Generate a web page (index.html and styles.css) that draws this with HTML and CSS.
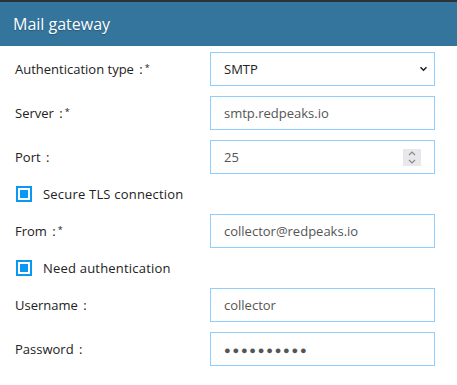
FILE: index.html
```html
<!DOCTYPE html>
<html lang="en">
  <head>
    <meta charset="UTF-8" />
    <title>Mail gateway</title>
    <link rel="stylesheet" href="styles.css">
  </head>
  <body>
    <header class="panel-header">
      <span>Mail gateway</span>
    </header>
    <div class="form">
      <div class="row">
        <label>Authentication type <span class="colon">:<sup>*</sup></span></label>
        <div class="field select">
          <span>SMTP</span>
          <svg class="chevron" width="9" height="6" viewBox="0 0 9 6">
            <path d="M1.5 1.2l3 3 3-3" fill="none" stroke="#222" stroke-width="1.6" />
          </svg>
        </div>
      </div>
      <div class="row">
        <label>Server <span class="colon">:<sup>*</sup></span></label>
        <div class="field">smtp.redpeaks.io</div>
      </div>
      <div class="row">
        <label>Port <span class="colon">:</span></label>
        <div class="field number">
          <span>25</span>
          <span class="spinner">
            <svg width="18" height="17" viewBox="0 0 18 17">
              <path d="M6 6l3-3 3 3M6 11l3 3 3-3" fill="none" stroke="#8a8a8a" stroke-width="1.2" />
            </svg>
          </span>
        </div>
      </div>
      <div class="check-row">
        <span class="checkbox"><span></span></span>
        <span>Secure TLS connection</span>
      </div>
      <div class="row">
        <label>From <span class="colon">:<sup>*</sup></span></label>
        <div class="field">collector@redpeaks.io</div>
      </div>
      <div class="check-row">
        <span class="checkbox"><span></span></span>
        <span>Need authentication</span>
      </div>
      <div class="row">
        <label>Username <span class="colon">:</span></label>
        <div class="field">collector</div>
      </div>
      <div class="row">
        <label>Password <span class="colon">:</span></label>
        <div class="field password">●●●●●●●●●●</div>
      </div>
    </div>
  </body>
</html>
```

FILE: styles.css
```css
body {
  margin: 0;
  font-family: "Open Sans", "Noto Sans", sans-serif;
  background: #fff;
  color: #222;
}
.panel-header {
  border-top: 2px solid #2b3238;
  background: #34759e;
  color: #fff;
  height: 44px;
  display: flex;
  align-items: center;
  padding: 0 13px;
  font-size: 16px;
  text-shadow: 0 1px 1px #0004;
}
.form {
  padding: 6px 22px 0 15px;
  display: flex;
  flex-direction: column;
  gap: 10px;
}
.row {
  display: flex;
  align-items: center;
  justify-content: space-between;
  font-size: 13px;
}
.colon {
  margin-left: 2px;
}
.colon sup {
  font-size: 9px;
  vertical-align: 3px;
  margin-left: 2px;
}
.field {
  box-sizing: border-box;
  width: 225px;
  height: 34px;
  border: 1px solid #8ecfff;
  padding: 0 13px;
  display: flex;
  align-items: center;
  color: #555;
  font-size: 13px;
}
.select {
  color: #222;
  justify-content: space-between;
  padding-right: 6px;
}
.number {
  justify-content: space-between;
  padding-right: 13px;
}
.spinner {
  display: flex;
  background: #e8e8ec;
}
.spinner svg {
  display: block;
}
.password {
  font-size: 11px;
  letter-spacing: 1.8px;
}
.check-row {
  display: flex;
  align-items: center;
  gap: 11px;
  height: 20px;
  padding-left: 1px;
  font-size: 13px;
  letter-spacing: 0.2px;
}
.checkbox {
  box-sizing: border-box;
  width: 16px;
  height: 16px;
  border: 2px solid #0a98f2;
  padding: 2px;
  display: flex;
}
.checkbox span {
  flex: 1;
  background: #0a98f2;
}
```
